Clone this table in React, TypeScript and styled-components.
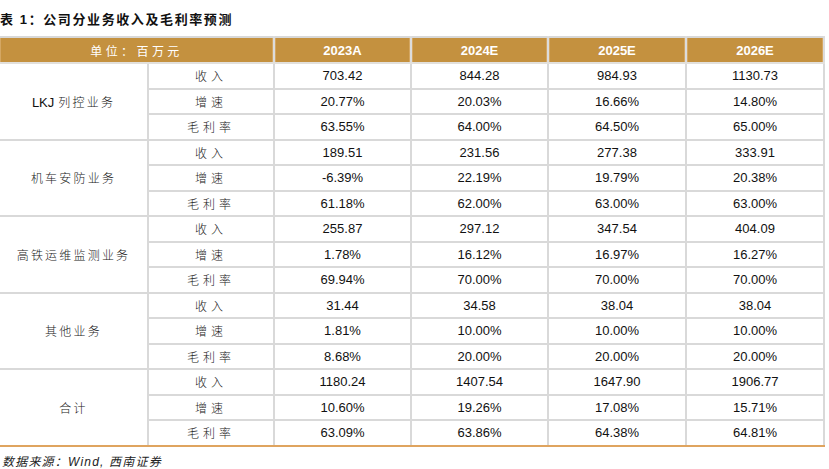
import * as React from "react"
import styled, { createGlobalStyle } from "styled-components"

const GlobalStyle = createGlobalStyle`
  body {
    margin: 0;
    background: #fff;
    font-family: "Liberation Sans", "Noto Sans CJK SC", sans-serif;
  }
`;

const Page = styled.main`
  width: 829px;
  padding-top: 8px;
`;

const Title = styled.h1`
  margin: 0;
  height: 28px;
  line-height: 24px;
  font-size: 13px;
  font-weight: 700;
  letter-spacing: 1.6px;
  color: #111;
  font-family: "Liberation Sans", "Noto Sans CJK SC", sans-serif;
`;

const Table = styled.table`
  width: 824px;
  border-collapse: collapse;
  table-layout: fixed;
`;

const Col = styled.col<{ $w: number }>`
  width: ${(p) => p.$w}px;
`;

const HeadCell = styled.th`
  height: 24px;
  padding: 0;
  background: #c4913f;
  color: #fff;
  font-size: 13px;
  font-weight: 700;
  text-align: center;
  border-top: 2px solid #d8d8d8;
  border-bottom: 2px solid #e2e0dc;
  border-right: 2px solid #dcdcdc;
  box-shadow: inset 8px 0 0 -7px #d4a763, inset -8px 0 0 -7px #d4a763;
`;

const UnitCell = styled(HeadCell)`
  font-family: "Noto Sans CJK SC", sans-serif;
  font-weight: 400;
  letter-spacing: 3.4px;
  font-size: 12px;
`;

const Cell = styled.td<{ $last?: boolean }>`
  height: 23.5px;
  padding: 0;
  text-align: center;
  font-size: 13px;
  color: #111;
  border: 2px solid #d9d9d9;
  border-left: none;
  ${(p) => p.$last && `border-bottom-color: #dfa45f;`}
`;

const SegmentCell = styled(Cell)`
  font-family: "Noto Sans CJK SC", sans-serif;
  font-weight: 300;
  font-size: 12px;
  letter-spacing: 2.2px;
  color: #222;
`;

const Latin = styled.span`
  font-family: "Liberation Sans", sans-serif;
  font-weight: 400;
  font-size: 13px;
  letter-spacing: 0;
  color: #111;
  margin-right: 4px;
`;

const MetricCell = styled(SegmentCell)`
  letter-spacing: 4px;
`;

const Source = styled.p`
  margin: 5px 0 0 2px;
  font-size: 12px;
  font-style: italic;
  color: #222;
  letter-spacing: 1.2px;
  font-family: "Liberation Sans", "Noto Sans CJK SC", sans-serif;
`;

type Group = { prefix?: string; name: string; rows: [string, string[]][] };

const groups: Group[] = [
  {
    prefix: "LKJ",
    name: "列控业务",
    rows: [
      ["收入", ["703.42", "844.28", "984.93", "1130.73"]],
      ["增速", ["20.77%", "20.03%", "16.66%", "14.80%"]],
      ["毛利率", ["63.55%", "64.00%", "64.50%", "65.00%"]],
    ],
  },
  {
    name: "机车安防业务",
    rows: [
      ["收入", ["189.51", "231.56", "277.38", "333.91"]],
      ["增速", ["-6.39%", "22.19%", "19.79%", "20.38%"]],
      ["毛利率", ["61.18%", "62.00%", "63.00%", "63.00%"]],
    ],
  },
  {
    name: "高铁运维监测业务",
    rows: [
      ["收入", ["255.87", "297.12", "347.54", "404.09"]],
      ["增速", ["1.78%", "16.12%", "16.97%", "16.27%"]],
      ["毛利率", ["69.94%", "70.00%", "70.00%", "70.00%"]],
    ],
  },
  {
    name: "其他业务",
    rows: [
      ["收入", ["31.44", "34.58", "38.04", "38.04"]],
      ["增速", ["1.81%", "10.00%", "10.00%", "10.00%"]],
      ["毛利率", ["8.68%", "20.00%", "20.00%", "20.00%"]],
    ],
  },
  {
    name: "合计",
    rows: [
      ["收入", ["1180.24", "1407.54", "1647.90", "1906.77"]],
      ["增速", ["10.60%", "19.26%", "17.08%", "15.71%"]],
      ["毛利率", ["63.09%", "63.86%", "64.38%", "64.81%"]],
    ],
  },
];

const years = ["2023A", "2024E", "2025E", "2026E"];
const widths = [148, 126, 137, 137, 138, 138];

export default function App() {
  return (
    <Page>
      <GlobalStyle />
      <Title>表 1：公司分业务收入及毛利率预测</Title>
      <Table>
        <colgroup>
          {widths.map((w, i) => (
            <Col key={i} $w={w} />
          ))}
        </colgroup>
        <thead>
          <tr>
            <UnitCell colSpan={2}>单位：百万元</UnitCell>
            {years.map((y) => (
              <HeadCell key={y}>{y}</HeadCell>
            ))}
          </tr>
        </thead>
        <tbody>
          {groups.map((g, gi) =>
            g.rows.map(([metric, values], ri) => {
              const last = gi === groups.length - 1 && ri === g.rows.length - 1;
              return (
                <tr key={g.name + metric}>
                  {ri === 0 && (
                    <SegmentCell rowSpan={3} $last={gi === groups.length - 1}>
                      {g.prefix && <Latin>{g.prefix}</Latin>}
                      {g.name}
                    </SegmentCell>
                  )}
                  <MetricCell $last={last}>{metric}</MetricCell>
                  {values.map((v, vi) => (
                    <Cell key={vi} $last={last}>
                      {v}
                    </Cell>
                  ))}
                </tr>
              );
            })
          )}
        </tbody>
      </Table>
      <Source>数据来源：Wind, 西南证券</Source>
    </Page>
  );
}
